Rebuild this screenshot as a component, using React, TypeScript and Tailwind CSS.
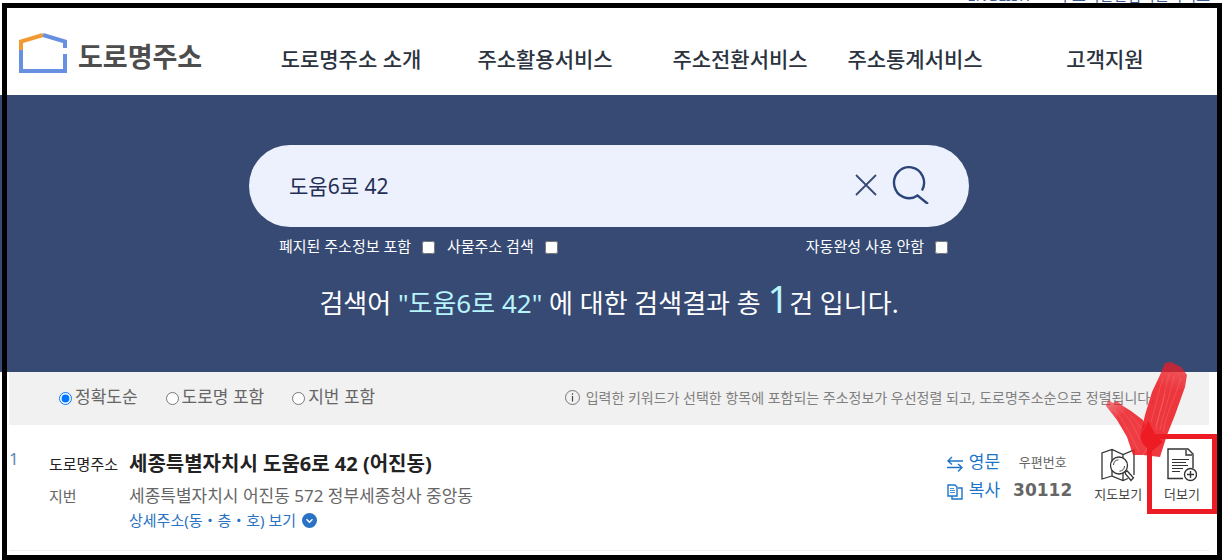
import { ReactElement, useState } from "react";

const menus = ["도로명주소 소개", "주소활용서비스", "주소전환서비스", "주소통계서비스", "고객지원"];
const sorts = ["정확도순", "도로명 포함", "지번 포함"];

export default function App(): ReactElement {
  return (
    <div className="relative overflow-hidden bg-white pb-[9px] font-['Noto_Sans','Noto_Sans_CJK_KR',sans-serif] text-[#666]">
      <UtilBar />
      <Header />
      <main>
        <Search />
        <Results />
      </main>
      <div className="pointer-events-none absolute top-[3px] right-0 bottom-0 left-0.5 border-5 border-black" />
    </div>
  )
}

const UtilBar = () => {
  return (
    <div className="flex h-[3px] items-end justify-end gap-7 overflow-hidden pr-3 text-[15px] leading-4 text-[#3d5a94]">
      <a href="#english">ENGLISH</a>
      <a href="#industry">주소기반산업지원서비스</a>
    </div>
  )
}

const Header = () => {
  return (
    <header className="flex h-[92px] items-center pt-5 pr-1">
      <a href="#home" className="flex w-[254px] shrink-0 items-center gap-2.5 pb-3 pl-[18px]">
        <Logo />
        <span className="pt-2 text-[27px] leading-8 font-bold text-[#4d4d4d]">도로명주소</span>
      </a>
      <nav className="grid grow grid-cols-[194fr_194fr_196fr_154fr_226fr] text-center text-[21px] leading-7 font-medium text-[#2b333f]">
        {menus.map((menu) => (
          <a key={menu} href="#menu">{menu}</a>
        ))}
      </nav>
    </header>
  )
}

const Search = () => {
  const [word, setWord] = useState("도움6로 42");

  return (
    <section className="bg-[#364a73] pt-[50px] pr-1 pb-[43px] text-white">
      <div className="mx-auto max-w-[720px]">
        <div className="flex h-[82px] items-center rounded-full bg-[#edf1fd] pr-10 pb-0.5 pl-10 text-[#1f2f55]">
          <input
            type="text"
            aria-label="주소 검색"
            value={word}
            onChange={(e) => setWord(e.target.value)}
            className="h-10 min-w-0 grow text-[21px] outline-none"
          />
          <button type="button" aria-label="지우기" onClick={() => setWord("")} className="mr-3.5">
            <svg width="22" height="22" viewBox="0 0 22 22" fill="none" stroke="#364a73" strokeWidth="1.8">
              <path d="M1 1l20 20M21 1L1 21" />
            </svg>
          </button>
          <button type="button" aria-label="검색">
            <svg width="38" height="38" viewBox="0 0 38 38" fill="none" stroke="#2c4579" strokeWidth="2.4">
              <path d="M31 24.500A15 15.500 0 1 0 26.500 29.500L37 38" />
            </svg>
          </button>
        </div>
        <div className="flex gap-3 pt-[7px] pr-[21px] pl-[30px] text-[15px] leading-6">
          <Check label="폐지된 주소정보 포함" />
          <Check label="사물주소 검색" />
          <Check label="자동완성 사용 안함" end />
        </div>
        <p className="pt-[19px] text-center text-[26px] leading-[52px]">
          검색어 <span className="text-[#b8f4fb]">"도움6로 42"</span> 에 대한 검색결과 총{" "}
          <span className="text-[38px] leading-none text-[#b8f4fb]">1</span>건 입니다.
        </p>
      </div>
    </section>
  )
}

const Check = ({ label, end = false }: { label: string; end?: boolean }) => {
  return (
    <label className={end ? "ml-auto flex items-center gap-[11px]" : "flex items-center gap-[11px]"}>
      {label}
      <input type="checkbox" className="mt-0.5 size-[13px]" />
    </label>
  )
}

const Results = () => {
  return (
    <section className="mr-[13px] ml-[9px]">
      <div className="flex h-[53px] items-center justify-between bg-[#f1f1f1] pr-[55px] pb-1 pl-[50px]">
        <div className="flex gap-7 text-[17px] leading-6">
          {sorts.map((sort, i) => (
            <label key={sort} className="flex items-center gap-[3px]">
              <input type="radio" name="sort" defaultChecked={i === 0} className="mt-1 size-[13px]" />
              {sort}
            </label>
          ))}
        </div>
        <p className="flex items-center gap-1.5 pt-0.5 text-[14px] leading-6 whitespace-nowrap text-[#808080]">
          <svg width="15" height="15" viewBox="0 0 15 15" fill="none" stroke="#777">
            <circle cx="7.5" cy="7.5" r="7" />
            <path d="M7.5 6v5.5M7.5 3.3v1.4" stroke="#444" strokeWidth="1.2" />
          </svg>
          입력한 키워드가 선택한 항목에 포함되는 주소정보가 우선정렬 되고, 도로명주소순으로 정렬됩니다.
        </p>
      </div>
      <article className="flex items-start border-b border-[#eee] pt-[23px] pb-[22px]">
        <span className="w-10 shrink-0 text-[17px] leading-[22px] text-[#5f86b5]">1</span>
        <dl className="grid grow grid-cols-[80px_1fr] items-center">
          <dt className="text-[15px] leading-8 text-[#222]">도로명주소</dt>
          <dd className="text-[20px] leading-8 font-bold text-[#222]">세종특별자치시 도움6로 42 (어진동)</dd>
          <dt className="text-[15px] leading-8">지번</dt>
          <dd className="text-[17px] leading-8">세종특별자치시 어진동 572 정부세종청사 중앙동</dd>
          <dd className="col-start-2">
            <button type="button" className="flex h-4 items-center gap-1.5 text-[15px] leading-4 text-[#2a72c3]">
              상세주소(동・층・호) 보기
              <svg width="15" height="15" viewBox="0 0 15 15" fill="none">
                <circle cx="7.5" cy="7.5" r="7.5" fill="#2a72c3" />
                <path d="M4.5 6.2l3 3 3-3" stroke="#fff" strokeWidth="1.4" />
              </svg>
            </button>
          </dd>
        </dl>
        <div className="flex shrink-0 text-center">
          <div className="flex flex-col text-[17px] leading-7 text-[#1c74c9]">
            <button type="button" className="flex items-center gap-1.5">
              <SwapIcon />
              영문
            </button>
            <button type="button" className="flex items-center gap-1.5">
              <CopyIcon />
              복사
            </button>
          </div>
          <div className="ml-[13px]">
            <p className="text-[13px] leading-7">우편번호</p>
            <p className="font-['DejaVu_Sans',sans-serif] text-[17px] leading-7 font-bold">30112</p>
          </div>
          <button type="button" className="ml-[22px] flex flex-col items-center text-[13px] leading-6 text-[#444]">
            <MapIcon />
            지도보기
          </button>
          <button type="button" className="relative mr-[9px] ml-[22px] flex flex-col items-center text-[13px] leading-6 text-[#444]">
            <MoreIcon />
            더보기
            <BrushCheck />
            <span className="pointer-events-none absolute -inset-x-[17px] -top-3.5 -bottom-2 border-5 border-[#ed1c24]" />
          </button>
        </div>
      </article>
    </section>
  )
}

const Logo = () => {
  return (
    <svg width="50" height="42" viewBox="0 0 50 42" fill="none" strokeWidth="4">
      <path d="M3 18V9.5L25 3" stroke="#f19a33" />
      <path d="M25 3l22 6.5V16" stroke="#6790e0" />
      <path d="M3 18v21h44V22" stroke="#6790e0" />
    </svg>
  )
}

const SwapIcon = () => {
  return (
    <svg width="16" height="16" viewBox="0 0 16 16" fill="none" stroke="#1c74c9" strokeWidth="1.4" className="mt-1">
      <path d="M16 5H1M5 1L1 5l4 3.500M0 11.500h15M11 8l4 3.500-4 4" />
    </svg>
  )
}

const CopyIcon = () => {
  return (
    <svg width="16" height="16" viewBox="0 0 16 16" fill="none" stroke="#1c74c9" strokeWidth="1.4" className="mt-1">
      <path d="M1 1h7l2 2v9H1z" />
      <path d="M11 4h4v11H5v-3" />
      <path d="M3 4.500h4M3 6.500h5M3 8.500h5" strokeWidth=".8" />
    </svg>
  )
}

const MapIcon = () => {
  return (
    <svg width="34" height="34" viewBox="0 0 34 34" fill="none" stroke="#333" strokeWidth="1.3">
      <path d="M11 28L1 31V5l10-3.500 11 5L33 2v25M11 1.500V28l11 4.500 5-2M22 6.500V32" />
      <circle cx="18" cy="17.500" r="8.500" fill="#fff" />
      <path d="M12.500 17a5.500 5.500 0 0 1 5-5.200M23.500 18a5.500 5.500 0 0 1-5 5.200" strokeWidth=".9" />
      <path d="M24 24.500l2-1.800 6.500 7-2.500 2.800-5.500-6.500z" fill="#fff" />
    </svg>
  )
}

const MoreIcon = () => {
  return (
    <svg width="30" height="34" viewBox="0 0 30 34" fill="none" stroke="#333" strokeWidth="1.4">
      <path d="M16 30.500H1V1h20l5 5v14M19 2v5h6" />
      <path d="M5 11.500h17M5 14.500h14M5 17.500h16M5 20.500h11M5 23.500h8" strokeWidth="1.2" />
      <circle cx="23.500" cy="26.500" r="6" fill="#fff" />
      <path d="M20 26.500h7M23.500 23v7" />
    </svg>
  )
}

const BrushCheck = () => {
  return (
    <svg
      width="84"
      height="98"
      viewBox="0 0 84 98"
      fill="none"
      className="pointer-events-none absolute -top-[88px] right-[13px] max-w-none"
    >
      <defs>
        <linearGradient id="brushLong" x1="72" y1="2" x2="64" y2="28" gradientUnits="userSpaceOnUse">
          <stop offset="0" stopColor="#ed1c24" stopOpacity=".7" />
          <stop offset="1" stopColor="#ed1c24" stopOpacity=".88" />
        </linearGradient>
        <linearGradient id="brushShort" x1="6" y1="40" x2="18" y2="56" gradientUnits="userSpaceOnUse">
          <stop offset="0" stopColor="#ed1c24" stopOpacity=".55" />
          <stop offset="1" stopColor="#ed1c24" stopOpacity=".86" />
        </linearGradient>
      </defs>
      <path d="M3 46l2-6 5 3 4-2 6 5 8 5 12 9 2 5-5 12 9 8-6 10-10 0-6-18-10-17z" fill="url(#brushShort)" />
      <path d="M57 15l5-12 6-1 10 5 6 8-2 12-10 28-8 20-7 22-17-2 6-10-9-8 5-22 7-23z" fill="url(#brushLong)" />
      <path d="M37 77l8-16 9 16 6 5-12 10-8-8z" fill="#ed1c24" />
      <g stroke="#fff" strokeOpacity=".12">
        <path d="M60 18c-6 18-7 28-12 44M66 14c-5 20-8 36-13 52M71 16c-4 20-10 34-14 54M78 18c-5 18-14 32-18 54M62 34c-3 14-8 24-9 36" />
        <path d="M11 50c9 8 15 22 25 42M18 50c8 8 14 18 19 30M26 54c4 4 8 8 12 14" />
      </g>
    </svg>
  )
}
